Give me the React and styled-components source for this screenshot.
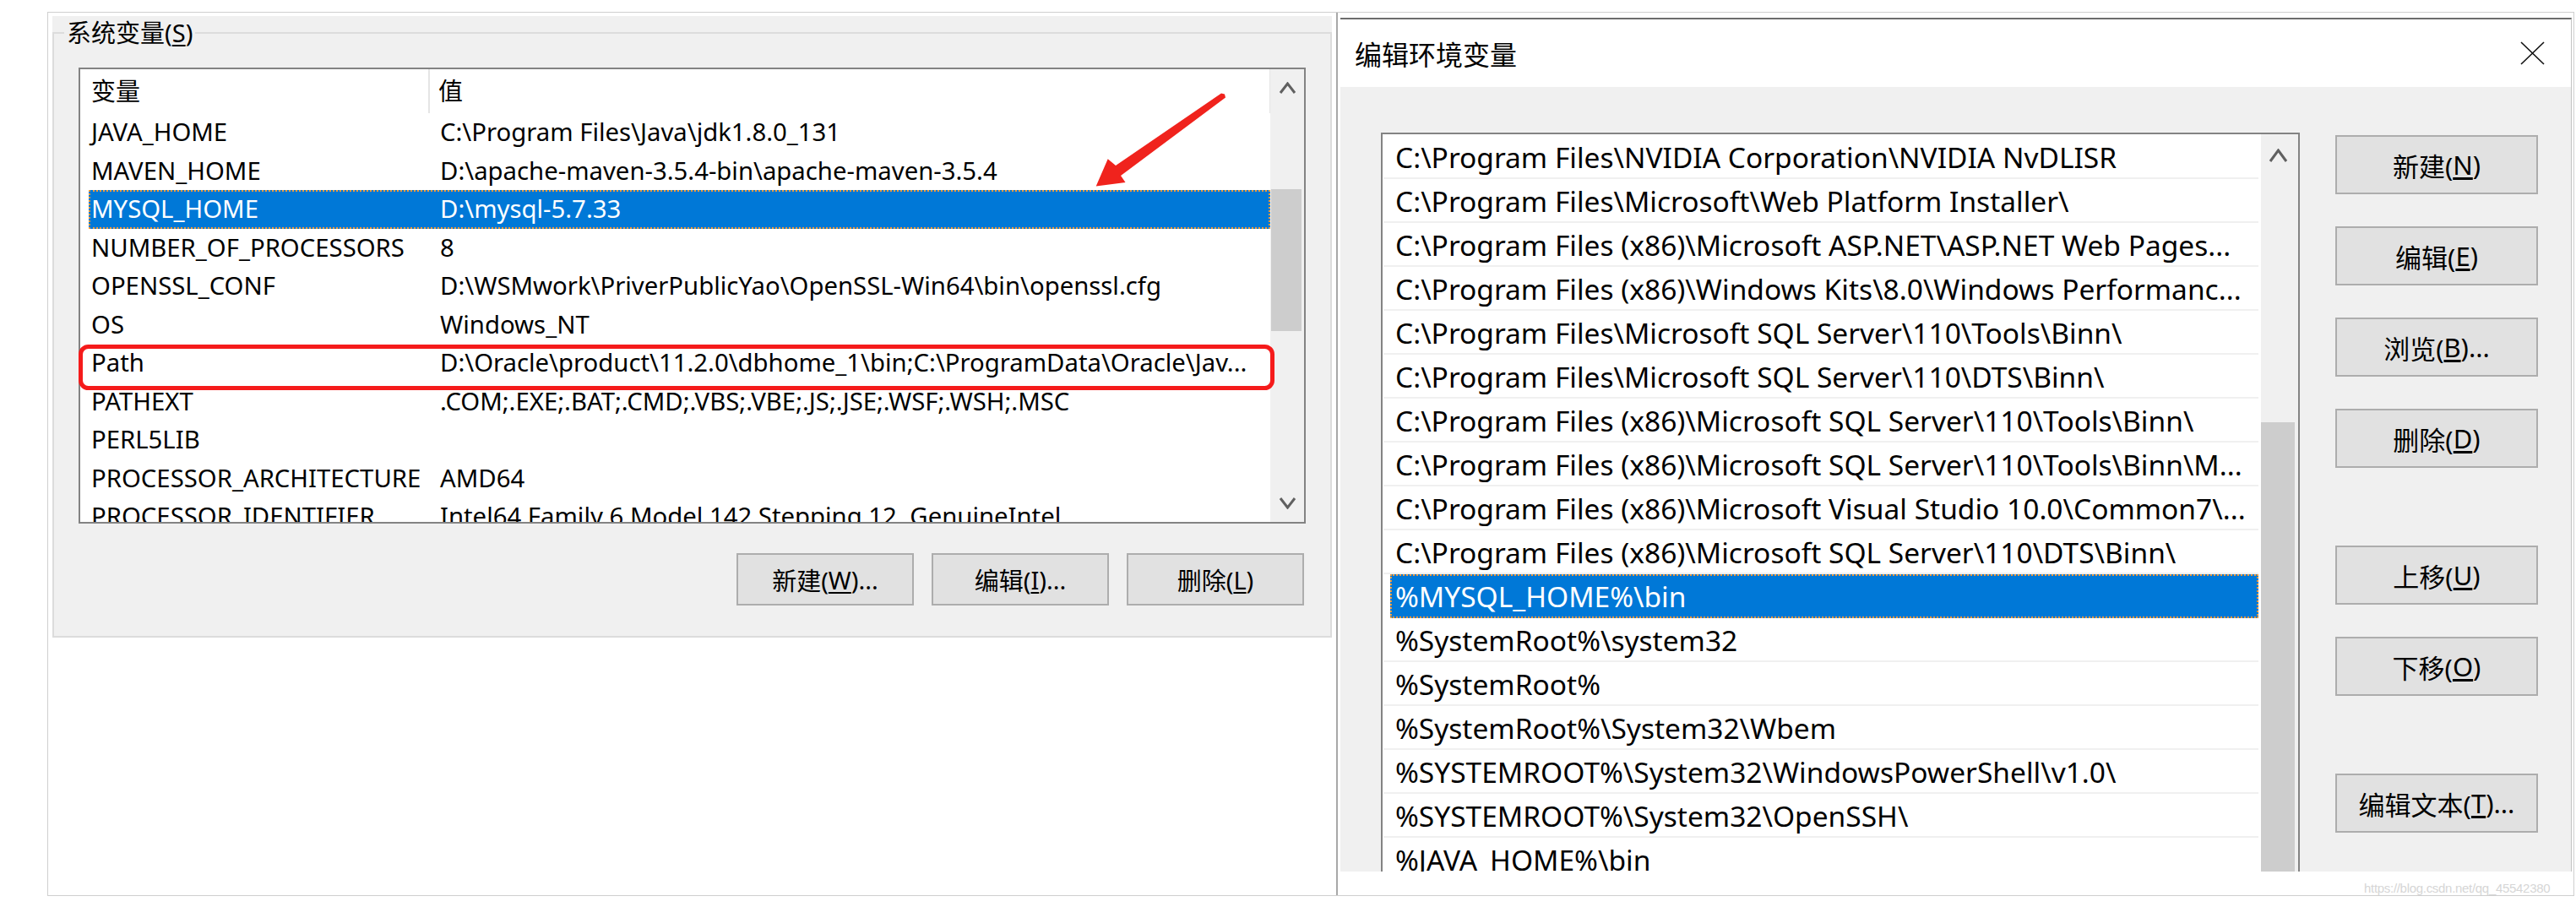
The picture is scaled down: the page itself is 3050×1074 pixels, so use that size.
import React from 'react';
import styled, { createGlobalStyle } from 'styled-components';

const ui = `"Noto Sans", "Noto Sans CJK SC", sans-serif`;

const GlobalStyle = createGlobalStyle`
  html, body {
    margin: 0;
    padding: 0;
    background: #fff;
  }
  body {
    font-family: ${ui};
    color: #000;
  }
`;

const Page = styled.div`
  position: relative;
  width: 3050px;
  height: 1074px;
  padding: 14px 0 0 56px;
  box-sizing: border-box;
  overflow: hidden;
`;

const Frame = styled.div`
  display: flex;
  width: 2992px;
  height: 1047px;
  box-sizing: border-box;
  border: 1px solid #cfcfcf;
`;

/* ---------- left window: system variables ---------- */

const LeftWindow = styled.div`
  width: 1527px;
  flex: none;
  box-sizing: border-box;
  padding: 4px 0 0 5px;
  border-right: 2px solid #a8a8a8;
`;

const Panel = styled.div`
  width: 1515px;
  height: 736px;
  background: #f0f0f0;
`;

const GroupBox = styled.fieldset`
  margin: 0;
  padding: 0;
  min-width: 0;
  height: 100%;
  box-sizing: border-box;
  border: 2px solid #dcdcdc;
`;

const GroupTitle = styled.legend`
  margin-left: 12px;
  padding: 0 3px;
  font-size: 29px;
  line-height: 40px;
  height: 40px;
`;

const GroupInner = styled.div`
  padding: 21px 29px 0;
`;

const ListBox = styled.div`
  display: flex;
  width: ${p => p.$w}px;
  height: ${p => p.$h}px;
  box-sizing: border-box;
  border: 2px solid #838383;
  background: #fff;
  overflow: hidden;
`;

const ListContent = styled.div`
  flex: 1;
  min-width: 0;
  overflow: hidden;
  padding: ${p => p.$pad || '0'};
`;

const HeaderRow = styled.div`
  display: grid;
  grid-template-columns: 414px 1fr;
  height: 52px;
  line-height: 52px;
  font-size: 29px;
  border-right: 1px solid #e5e5e5;
`;

const HeaderCell = styled.div`
  padding-left: ${p => (p.$first ? 13 : 10)}px;
  border-right: ${p => (p.$first ? '2px solid #e5e5e5' : 'none')};
`;

const VarRow = styled.div`
  display: grid;
  grid-template-columns: ${p => (p.$selected ? '404px 1fr' : '414px 1fr')};
  margin-left: ${p => (p.$selected ? 10 : 0)}px;
  height: 45.5px;
  line-height: 45.5px;
  font-size: 29.3px;
  white-space: nowrap;
  background: ${p => (p.$selected ? '#0078d7' : 'transparent')};
  color: ${p => (p.$selected ? '#fff' : '#000')};
  outline: ${p => (p.$selected ? '2px dotted #ee9a3a' : 'none')};
  outline-offset: -2px;
`;

const NameCell = styled.div`
  overflow: hidden;
  padding-left: ${p => (p.$selected ? 3 : 13)}px;
`;

const ValueCell = styled.div`
  overflow: hidden;
  padding-left: 12px;
`;

const ScrollBar = styled.div`
  display: flex;
  flex-direction: column;
  width: ${p => p.$w}px;
  flex: none;
  background: #f0f0f0;
`;

const ScrollArrow = styled.div`
  display: flex;
  align-items: center;
  justify-content: center;
  height: ${p => p.$h}px;
  flex: none;
  padding-right: ${p => p.$shift || 0}px;
`;

const ScrollTrack = styled.div`
  flex: 1;
  min-height: 0;
  overflow: hidden;
`;

const ScrollThumb = styled.div`
  margin: ${p => p.$top}px ${p => p.$right}px 0 ${p => p.$left}px;
  height: ${p => p.$h}px;
  background: #cdcdcd;
`;

const ButtonRow = styled.div`
  display: flex;
  justify-content: flex-end;
  gap: 21px;
  margin-top: 35px;
  padding-right: 2px;
`;

const Button = styled.div`
  display: flex;
  align-items: center;
  justify-content: center;
  width: ${p => p.$w}px;
  height: ${p => p.$h}px;
  box-sizing: border-box;
  background: #e1e1e1;
  border: 2px solid #adadad;
  font-size: ${p => p.$size}px;
  white-space: nowrap;
  margin-top: ${p => p.$gap || 0}px;
`;

const Key = styled.span`
  text-decoration: underline;
  text-underline-offset: 3px;
`;

/* ---------- right window: edit environment variable ---------- */

const RightWindow = styled.div`
  width: 1458px;
  height: 1011px;
  flex: none;
  margin: 6px 0 0 3px;
  box-sizing: border-box;
  display: flex;
  flex-direction: column;
  border-top: 2px solid #6d6d6d;
  border-right: 1px solid #c4c4c4;
`;

const TitleBar = styled.div`
  display: flex;
  align-items: center;
  justify-content: space-between;
  height: 80px;
  flex: none;
  padding: 0 30px 0 17px;
  background: #fff;
`;

const TitleText = styled.div`
  font-size: 32px;
`;

const DialogBody = styled.div`
  flex: 1;
  min-height: 0;
  display: flex;
  gap: 42px;
  padding: 54px 0 0 48px;
  background: #f0f0f0;
  overflow: hidden;
`;

const PathRow = styled.div`
  height: 52px;
  box-sizing: border-box;
  padding-top: 3px;
  line-height: 47px;
  font-size: 33.5px;
  white-space: nowrap;
  overflow: hidden;
  border-bottom: 2px solid ${p => (p.$selected ? '#0078d7' : '#f0f0f0')};
  margin-left: ${p => (p.$selected ? 8 : 0)}px;
  padding-left: ${p => (p.$selected ? 6 : 14)}px;
  background: ${p => (p.$selected ? '#0078d7' : '#fff')};
  color: ${p => (p.$selected ? '#fff' : '#000')};
  outline: ${p => (p.$selected ? '2px dotted #ee9a3a' : 'none')};
  outline-offset: -2px;
`;

const ButtonColumn = styled.div`
  display: flex;
  flex-direction: column;
  gap: 38px;
  padding-top: 3px;
`;

const Annotations = styled.svg`
  position: absolute;
  left: 0;
  top: 0;
  pointer-events: none;
`;

const Watermark = styled.div`
  position: absolute;
  left: 2799px;
  top: 1043px;
  font-family: "Liberation Sans", sans-serif;
  font-size: 15px;
  color: #d6d6d6;
  letter-spacing: -0.3px;
`;

const Chevron = ({ down, w = 17, h = 11 }) => (
  <svg width={w + 4} height={h + 4} viewBox={`0 0 ${w + 4} ${h + 4}`}>
    <polyline
      points={down ? `2,2 ${w / 2 + 2},${h + 2} ${w + 2},2` : `2,${h + 2} ${w / 2 + 2},2 ${w + 2},${h + 2}`}
      fill="none"
      stroke="#606060"
      strokeWidth="3"
    />
  </svg>
);

const CloseIcon = () => (
  <svg width="31" height="28" viewBox="0 0 31 28">
    <path d="M2 1 L29 27 M29 1 L2 27" stroke="#111" strokeWidth="1.6" fill="none" />
  </svg>
);

const vars = [
  ['JAVA_HOME', 'C:\\Program Files\\Java\\jdk1.8.0_131'],
  ['MAVEN_HOME', 'D:\\apache-maven-3.5.4-bin\\apache-maven-3.5.4'],
  ['MYSQL_HOME', 'D:\\mysql-5.7.33', true],
  ['NUMBER_OF_PROCESSORS', '8'],
  ['OPENSSL_CONF', 'D:\\WSMwork\\PriverPublicYao\\OpenSSL-Win64\\bin\\openssl.cfg'],
  ['OS', 'Windows_NT'],
  ['Path', 'D:\\Oracle\\product\\11.2.0\\dbhome_1\\bin;C:\\ProgramData\\Oracle\\Jav...'],
  ['PATHEXT', '.COM;.EXE;.BAT;.CMD;.VBS;.VBE;.JS;.JSE;.WSF;.WSH;.MSC'],
  ['PERL5LIB', ''],
  ['PROCESSOR_ARCHITECTURE', 'AMD64'],
  ['PROCESSOR_IDENTIFIER', 'Intel64 Family 6 Model 142 Stepping 12, GenuineIntel'],
];

const paths = [
  'C:\\Program Files\\NVIDIA Corporation\\NVIDIA NvDLISR',
  'C:\\Program Files\\Microsoft\\Web Platform Installer\\',
  'C:\\Program Files (x86)\\Microsoft ASP.NET\\ASP.NET Web Pages...',
  'C:\\Program Files (x86)\\Windows Kits\\8.0\\Windows Performanc...',
  'C:\\Program Files\\Microsoft SQL Server\\110\\Tools\\Binn\\',
  'C:\\Program Files\\Microsoft SQL Server\\110\\DTS\\Binn\\',
  'C:\\Program Files (x86)\\Microsoft SQL Server\\110\\Tools\\Binn\\',
  'C:\\Program Files (x86)\\Microsoft SQL Server\\110\\Tools\\Binn\\M...',
  'C:\\Program Files (x86)\\Microsoft Visual Studio 10.0\\Common7\\...',
  'C:\\Program Files (x86)\\Microsoft SQL Server\\110\\DTS\\Binn\\',
  '%MYSQL_HOME%\\bin',
  '%SystemRoot%\\system32',
  '%SystemRoot%',
  '%SystemRoot%\\System32\\Wbem',
  '%SYSTEMROOT%\\System32\\WindowsPowerShell\\v1.0\\',
  '%SYSTEMROOT%\\System32\\OpenSSH\\',
  '%JAVA_HOME%\\bin',
];

const sideButtons = [
  ['新建(', 'N', ')', 0],
  ['编辑(', 'E', ')', 0],
  ['浏览(', 'B', ')...', 0],
  ['删除(', 'D', ')', 0],
  ['上移(', 'U', ')', 54],
  ['下移(', 'O', ')', 0],
  ['编辑文本(', 'T', ')...', 54],
];

const App = () => {
  return (
    <Page>
      <GlobalStyle />
      <Frame>
        <LeftWindow>
          <Panel>
            <GroupBox>
              <GroupTitle>
                系统变量(<Key>S</Key>)
              </GroupTitle>
              <GroupInner>
                <ListBox $w={1453} $h={540}>
                  <ListContent>
                    <HeaderRow>
                      <HeaderCell $first>变量</HeaderCell>
                      <HeaderCell>值</HeaderCell>
                    </HeaderRow>
                    {vars.map(([name, value, sel]) => (
                      <VarRow key={name} $selected={sel}>
                        <NameCell $selected={sel}>{name}</NameCell>
                        <ValueCell>{value}</ValueCell>
                      </VarRow>
                    ))}
                  </ListContent>
                  <ScrollBar $w={40}>
                    <ScrollArrow $h={44}>
                      <Chevron />
                    </ScrollArrow>
                    <ScrollTrack>
                      <ScrollThumb $top={98} $h={168} $left={1} $right={3} />
                    </ScrollTrack>
                    <ScrollArrow $h={46}>
                      <Chevron down />
                    </ScrollArrow>
                  </ScrollBar>
                </ListBox>
                <ButtonRow>
                  <Button $w={210} $h={62} $size={29}>
                    新建(<Key>W</Key>)...
                  </Button>
                  <Button $w={210} $h={62} $size={29}>
                    编辑(<Key>I</Key>)...
                  </Button>
                  <Button $w={210} $h={62} $size={29}>
                    删除(<Key>L</Key>)
                  </Button>
                </ButtonRow>
              </GroupInner>
            </GroupBox>
          </Panel>
        </LeftWindow>

        <RightWindow>
          <TitleBar>
            <TitleText>编辑环境变量</TitleText>
            <CloseIcon />
          </TitleBar>
          <DialogBody>
            <ListBox $w={1088} $h={1000}>
              <ListContent $pad="1px 3px 0 1px">
                {paths.map((p, i) => (
                  <PathRow key={i} $selected={i === 10}>
                    {p}
                  </PathRow>
                ))}
              </ListContent>
              <ScrollBar $w={44}>
                <ScrollArrow $h={50} $shift={4}>
                  <Chevron w={19} h={13} />
                </ScrollArrow>
                <ScrollTrack>
                  <ScrollThumb $top={291} $h={700} $left={0} $right={4} />
                </ScrollTrack>
              </ScrollBar>
            </ListBox>
            <ButtonColumn>
              {sideButtons.map(([a, k, b, extra]) => (
                <Button key={a} $w={240} $h={70} $size={31} $gap={extra}>
                  {a}
                  <Key>{k}</Key>
                  {b}
                </Button>
              ))}
            </ButtonColumn>
          </DialogBody>
        </RightWindow>
      </Frame>

      <Annotations width="3050" height="1074" viewBox="0 0 3050 1074">
        <rect x="95.5" y="410.5" width="1411" height="49" rx="9" fill="none" stroke="#f51b1b" strokeWidth="5" />
        <polygon
          points="1297.7,220.5 1311.7,188.3 1321,196 1446,110.5 1450,111.5 1451,115.5 1327,208 1332.5,216"
          fill="#f0231d"
        />
      </Annotations>
      <Watermark>https://blog.csdn.net/qq_45542380</Watermark>
    </Page>
  );
};

export default App;
